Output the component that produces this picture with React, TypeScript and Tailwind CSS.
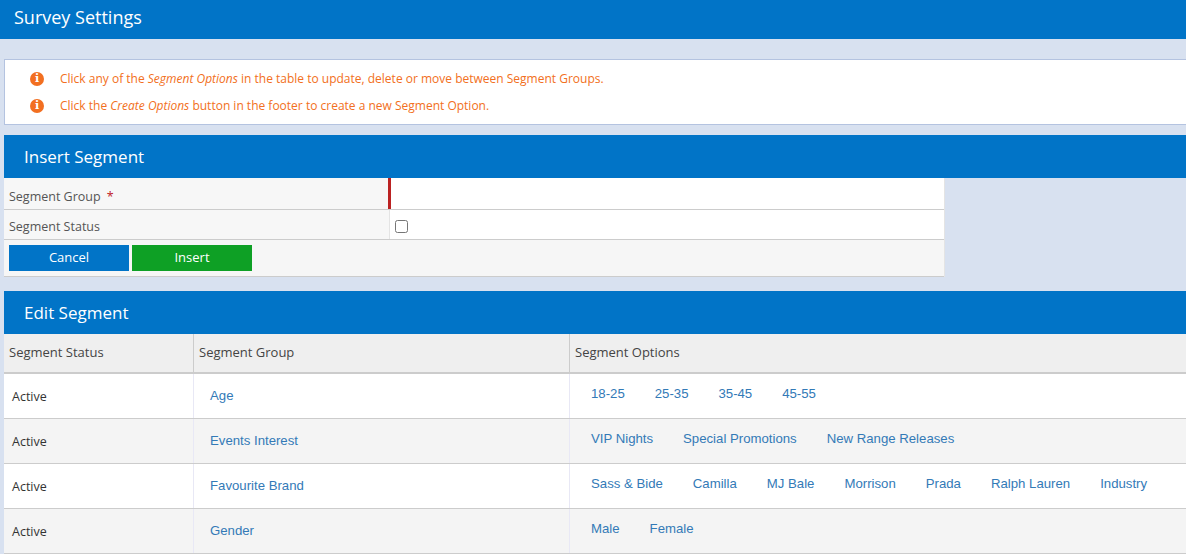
const openSans = "font-['Open_Sans',sans-serif]";

const rows = [
  { group: "Age", options: ["18-25", "25-35", "35-45", "45-55"] },
  { group: "Events Interest", options: ["VIP Nights", "Special Promotions", "New Range Releases"] },
  {
    group: "Favourite Brand",
    options: ["Sass & Bide", "Camilla", "MJ Bale", "Morrison", "Prada", "Ralph Lauren", "Industry"],
  },
  { group: "Gender", options: ["Male", "Female"] },
];

function SectionHeader({ title }: { title: string }) {
  return (
    <div className="h-[43px] bg-[#0174c7] pl-5 flex items-center text-white text-[17px]">
      {title}
    </div>
  );
}

function Notice({ children }: { children: React.ReactNode }) {
  return (
    <div className="flex items-center h-[27px]">
      <span className="w-[14px] h-[14px] rounded-full bg-[#f26f21] flex items-center justify-center mr-4">
        <span className="text-white text-[11px] leading-none font-bold font-['DejaVu_Serif',serif]">i</span>
      </span>
      <span>{children}</span>
    </div>
  );
}

export default function App() {
  return (
    <div className={`${openSans} w-[1186px] h-[554px] overflow-hidden bg-[#d8e1f0]`}>
      <div className="h-[39px] bg-[#0174c7] pl-[14px] pb-1 flex items-center text-white text-[18px]">
        Survey Settings
      </div>

      <div className="pl-1 pt-5">
        <div className="h-[66px] bg-white border border-r-0 border-[#b4c3e0] pl-[25px] pt-[5px] text-[12px] text-[#f26f21]">
          <Notice>
            Click any of the <i>Segment Options</i> in the table to update, delete or move between Segment Groups.
          </Notice>
          <Notice>
            Click the <i>Create Options</i> button in the footer to create a new Segment Option.
          </Notice>
        </div>

        <div className="mt-[10px]">
          <SectionHeader title="Insert Segment" />
          <div className="w-[941px] border-r border-[#e4e4e4] text-[12.5px] text-[#555]">
            <div className="flex h-[32px] border-b border-[#cccccc]">
              <div className="w-[384px] bg-[#f7f7f7] pl-[5px] pt-2 flex items-center">
                Segment Group <span className="text-[#c02026] ml-[6px]">*</span>
              </div>
              <div className="flex-1 bg-white border-l-[3px] border-[#bb2222]" />
            </div>
            <div className="flex h-[30px] border-b border-[#cccccc]">
              <div className="w-[386px] bg-[#f7f7f7] pl-[5px] pt-[6px] flex items-center border-r border-[#e4e4e4]">
                Segment Status
              </div>
              <div className="flex-1 bg-white pl-[5px] pt-1 flex items-center">
                <input type="checkbox" className="w-[13px] h-[13px] m-0" />
              </div>
            </div>
            <div className="h-[37px] bg-[#f6f6f6] border-b border-[#cccccc] pl-[5px] pt-[5px] flex gap-[3px]">
              <button className="w-[120px] h-[26px] bg-[#0174c7] text-white text-[13px] font-medium">
                Cancel
              </button>
              <button className="w-[120px] h-[26px] bg-[#0ea025] text-white text-[13px] font-medium">
                Insert
              </button>
            </div>
          </div>
        </div>

        <div className="mt-[14px]">
          <SectionHeader title="Edit Segment" />
          <div className="flex h-[40px] bg-[#efefef] border-b-2 border-[#cccccc] text-[13px] text-[#444]">
            <div className="w-[190px] pl-[5px] flex items-center border-r border-[#cccccc]">Segment Status</div>
            <div className="w-[376px] pl-[5px] flex items-center border-r border-[#cccccc]">Segment Group</div>
            <div className="flex-1 pl-[5px] flex items-center">Segment Options</div>
          </div>
          {rows.map((row, i) => (
            <div
              key={row.group}
              className={`flex h-[45px] border-b border-[#cccccc] ${i % 2 ? "bg-[#f4f4f4]" : "bg-white"}`}
            >
              <div className="w-[190px] pl-2 pt-[2px] flex items-center border-r border-[#e8e8f5] text-[12.5px] text-[#333]">
                Active
              </div>
              <div className="w-[376px] pl-4 flex items-center border-r border-[#e8e8f5] font-['Liberation_Sans',sans-serif] text-[13.2px] text-[#337ab7]">
                {row.group}
              </div>
              <div className="flex-1 pl-[21px] pb-1 flex items-center gap-[30px] font-['Liberation_Sans',sans-serif] text-[13.2px] text-[#337ab7]">
                {row.options.map((option) => (
                  <span key={option}>{option}</span>
                ))}
              </div>
            </div>
          ))}
        </div>
      </div>
    </div>
  );
}
